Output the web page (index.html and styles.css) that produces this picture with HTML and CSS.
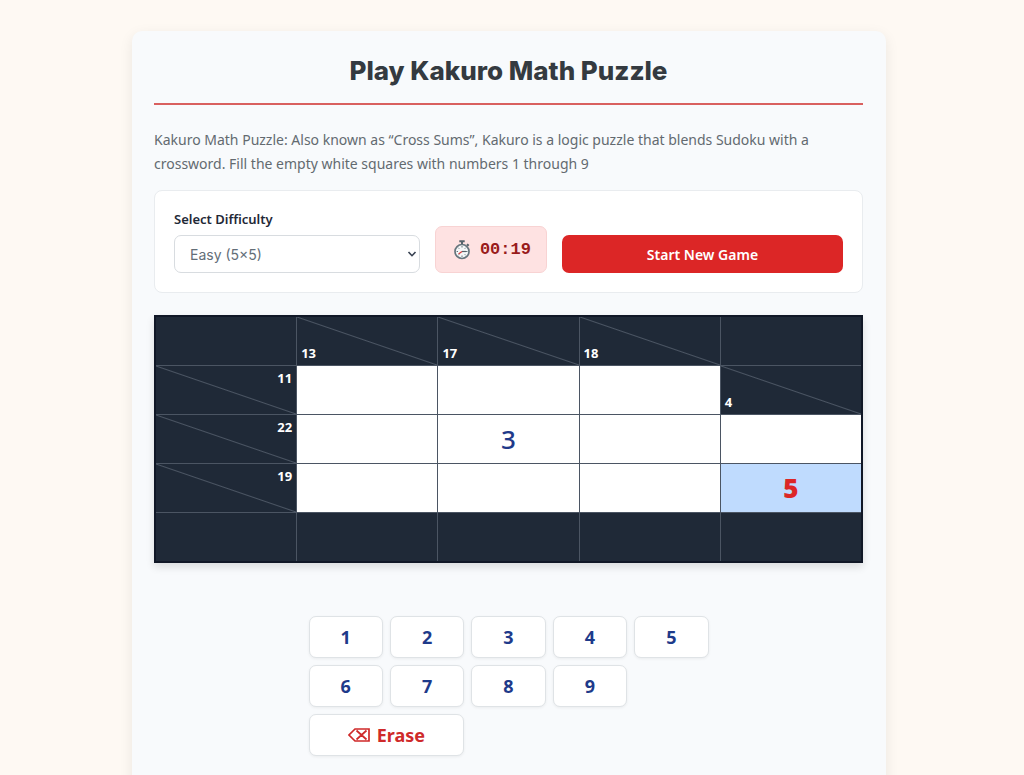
FILE: index.html
```html
<!DOCTYPE html>
<html lang="en">
<head>
  <meta charset="UTF-8" />
  <meta name="viewport" content="width=device-width, initial-scale=1" />
  <title>Play Kakuro Math Puzzle</title>
  <link rel="stylesheet" href="styles.css">
</head>
<body>

<main class="game-card">
  <h1>Play Kakuro Math Puzzle</h1>
  <p class="intro">Kakuro Math Puzzle: Also known as “Cross Sums”, Kakuro is a logic puzzle that blends Sudoku with a crossword. Fill the empty white squares with numbers 1 through 9</p>

  <div class="controls">
    <div class="field">
      <label for="difficulty">Select Difficulty</label>
      <div class="select-wrap">
        <select id="difficulty">
          <option>Easy (5×5)</option>
          <option>Medium (7×7)</option>
          <option>Hard (9×9)</option>
        </select>
        <svg class="chevron" viewBox="0 0 10 8" aria-hidden="true"><path d="M1.5 2 5 5.7 8.5 2" fill="none" stroke="#374151" stroke-width="1.6"/></svg>
      </div>
    </div>
    <div class="timer">
      <svg viewBox="0 0 18 20" aria-hidden="true">
        <path d="M6.3 1.2h5.4M9 1.2v3" stroke="#55636b" stroke-width="2"/>
        <path d="M14 4.2l1.7 1.5" stroke="#55636b" stroke-width="2"/>
        <circle cx="9" cy="11.5" r="7" fill="#f5f7f8" stroke="#66757d" stroke-width="1.7"/>
        <path d="M9 6v1.5M9 15.5V17M3.6 11.5H5M13 11.5h1.5M5.2 7.7l1 1M12.8 7.7l-1 1M5.2 15.3l1-1M12.8 15.3l-1-1" stroke="#66757d" stroke-width="1"/>
        <path d="M9 11.5h4" stroke="#55636b" stroke-width="1.2"/>
        <path d="M9 11.5 5.5 14" stroke="#d33a3a" stroke-width="1.2"/>
      </svg>
      <span>00:19</span>
    </div>
    <button class="new-game" type="button">Start New Game</button>
  </div>

  <div class="board">
    <!-- row 1 -->
    <div class="block"></div>
    <div class="block clue down"><span>13</span></div>
    <div class="block clue down"><span>17</span></div>
    <div class="block clue down"><span>18</span></div>
    <div class="block"></div>
    <!-- row 2 -->
    <div class="block clue across"><span>11</span></div>
    <button class="cell" type="button" aria-label="Row 2, column 2"></button>
    <button class="cell" type="button" aria-label="Row 2, column 3"></button>
    <button class="cell" type="button" aria-label="Row 2, column 4"></button>
    <div class="block clue down"><span>4</span></div>
    <!-- row 3 -->
    <div class="block clue across"><span>22</span></div>
    <button class="cell" type="button" aria-label="Row 3, column 2"></button>
    <button class="cell" type="button">3</button>
    <button class="cell" type="button" aria-label="Row 3, column 4"></button>
    <button class="cell" type="button" aria-label="Row 3, column 5"></button>
    <!-- row 4 -->
    <div class="block clue across"><span>19</span></div>
    <button class="cell" type="button" aria-label="Row 4, column 2"></button>
    <button class="cell" type="button" aria-label="Row 4, column 3"></button>
    <button class="cell" type="button" aria-label="Row 4, column 4"></button>
    <button class="cell selected error" type="button">5</button>
    <!-- row 5 -->
    <div class="block"></div>
    <div class="block"></div>
    <div class="block"></div>
    <div class="block"></div>
    <div class="block"></div>
  </div>

  <div class="keypad">
    <button type="button">1</button>
    <button type="button">2</button>
    <button type="button">3</button>
    <button type="button">4</button>
    <button type="button">5</button>
    <button type="button">6</button>
    <button type="button">7</button>
    <button type="button">8</button>
    <button type="button">9</button>
    <button type="button" class="erase">
      <svg viewBox="0 0 22 14" aria-hidden="true"><path d="M7 1h14v12H7L1 7zM8.5 2.5l10 9M18.5 2.5l-10 9" fill="none" stroke="currentColor" stroke-width="1.7"/></svg>
      Erase
    </button>
  </div>
</main>

</body>
</html>
```
FILE: styles.css
```css
* {
  box-sizing: border-box;
}
body {
  margin: 0;
  padding: 31px 6px 31px 0;
  background: #fef9f3;
  color: #1f2937;
  font-family: "Noto Sans", "Open Sans", sans-serif;
}
button, select {
  font-family: inherit;
  cursor: pointer;
}
.game-card {
  max-width: 754px;
  margin: 0 auto;
  padding: 23px 23px 48px 22px;
  background: #f8fafc;
  border-radius: 10px;
  box-shadow: 0 4px 14px rgba(0, 0, 0, 0.08);
}
h1 {
  margin: 0 0 23px;
  padding-bottom: 15px;
  border-bottom: 2px solid #d9605f;
  color: #343a40;
  font-family: Inter, sans-serif;
  font-size: 26px;
  line-height: 34px;
  font-weight: 800;
  text-align: center;
}
.intro {
  margin: 0 0 14px;
  color: #636a70;
  font-size: 14px;
  line-height: 24px;
}

/* Controls */
.controls {
  display: flex;
  align-items: flex-end;
  gap: 15px;
  padding: 19px;
  margin-bottom: 22px;
  background: white;
  border: 1px solid #e9ecef;
  border-radius: 8px;
}
.field {
  flex: 7;
}
.field label {
  display: block;
  margin-bottom: 7px;
  font-size: 13px;
  line-height: 18px;
  font-weight: 600;
}
.select-wrap {
  position: relative;
}
.select-wrap select {
  display: block;
  width: 100%;
  height: 38px;
  padding: 0 15px;
  appearance: none;
  background: white;
  border: 1px solid #d8dce0;
  border-radius: 7px;
  color: #636e78;
  font-family: Inter, sans-serif;
  font-size: 14px;
}
.chevron {
  position: absolute;
  right: 3px;
  top: 15px;
  width: 10px;
  height: 8px;
  pointer-events: none;
}
.timer {
  display: flex;
  align-items: center;
  gap: 9px;
  height: 47px;
  padding: 0 15px 0 17px;
  background: #fee2e2;
  border: 1px solid #f8d3d3;
  border-radius: 7px;
  color: #991b1b;
  font-family: "Liberation Mono", monospace;
  font-size: 17px;
  font-weight: 700;
}
.timer svg {
  width: 18px;
  height: 20px;
}
.new-game {
  flex: 8;
  height: 38px;
  padding: 0;
  background: #dc2626;
  border: none;
  border-radius: 7px;
  color: white;
  font-size: 14px;
  font-weight: 600;
}
.new-game:hover {
  background: #b91c1c;
}

/* Board */
.board {
  display: grid;
  grid-template-columns: repeat(5, 1fr);
  grid-auto-rows: 48px;
  gap: 1px;
  margin-bottom: 53px;
  background: #4b5563;
  border: 2px solid #111827;
  box-shadow: 0 4px 8px rgba(0, 0, 0, 0.12);
}
.block {
  background: #1f2937;
}
.clue {
  display: flex;
  padding: 4px;
  background-image: linear-gradient(to top right, transparent calc(50% - 1px), #4b5563 50%, transparent calc(50% + 1px));
  color: white;
  font-size: 13px;
  line-height: 16px;
  font-weight: 700;
}
.down {
  align-items: flex-end;
}
.across {
  justify-content: flex-end;
}
.cell {
  padding: 0;
  background: white;
  border: none;
  color: #1e3a8a;
  font-size: 26px;
  line-height: 36px;
  font-weight: 500;
}
.selected {
  background: #bfdbfe;
}
.error {
  color: #dc2626;
  font-weight: 900;
}

/* Keypad */
.keypad {
  display: grid;
  grid-template-columns: repeat(5, 1fr);
  grid-auto-rows: 42px;
  gap: 7px;
  max-width: 400px;
  margin: 0 auto;
}
.keypad button {
  padding: 0;
  background: white;
  border: 1px solid #dfe3e6;
  border-radius: 7px;
  box-shadow: 0 1px 3px rgba(0, 0, 0, 0.06);
  color: #1e3a8a;
  font-size: 18px;
  font-weight: 700;
}
.keypad .erase {
  display: flex;
  grid-column: span 2;
  justify-content: center;
  align-items: center;
  gap: 7px;
  color: #cf2a2a;
}
.erase svg {
  width: 22px;
  height: 14px;
}
```
